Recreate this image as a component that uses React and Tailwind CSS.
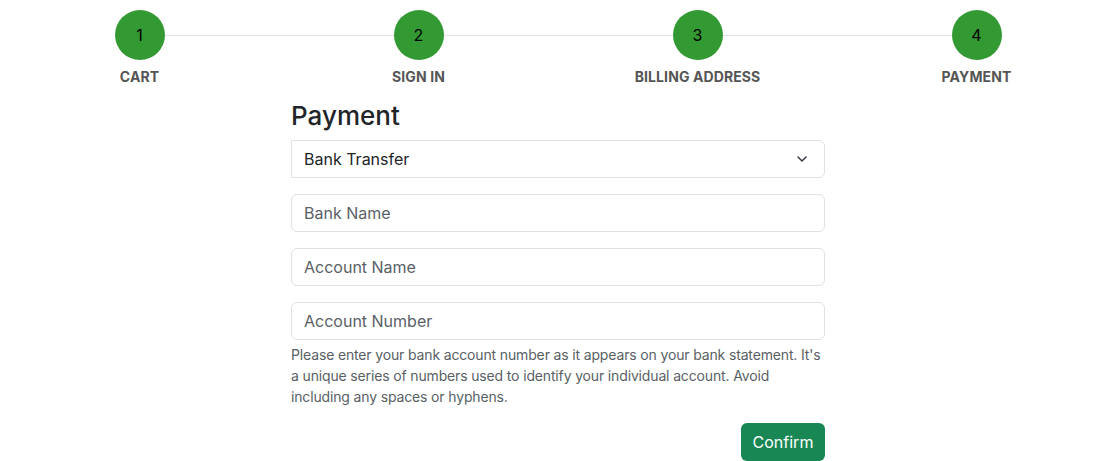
import { ChevronDown } from 'lucide-react';

const steps = ['Cart', 'Sign In', 'Billing Address', 'Payment'];

function Stepper() {
  return (
    <div className="flex">
      {steps.map((label, i) => (
        <div key={label} className="relative flex flex-1 flex-col items-center pt-[10px]">
          {i < steps.length - 1 && (
            <div className="absolute top-[35px] left-1/2 h-px w-full bg-[#e2e2e2]" />
          )}
          <div className="relative z-10 flex h-[50px] w-[50px] items-center justify-center rounded-full bg-[#339933] text-base text-black">
            {i + 1}
          </div>
          <div className="mt-[9px] text-[14px] font-bold uppercase leading-4 tracking-[0.1px] text-[#555]">{label}</div>
        </div>
      ))}
    </div>
  );
}

function Field({ placeholder }) {
  return (
    <input
      placeholder={placeholder}
      className="h-[38px] w-full rounded-md border border-[#dee2e6] bg-white px-3 text-base text-[#212529] outline-none placeholder:text-[#595f66]"
    />
  );
}

export default function App() {
  return (
    <div className="min-h-screen bg-white font-['Inter',sans-serif] text-[#212529]">
      <Stepper />
      <div className="mx-auto mt-[15px] w-[534px]">
        <h3 className="text-[26px] font-medium leading-[32px]">Payment</h3>
        <div className="mt-[8px] flex h-[38px] items-center justify-between rounded-r-md border border-[#dee2e6] bg-white pl-3 pr-[14px] text-base">
          <span>Bank Transfer</span>
          <ChevronDown size={16} strokeWidth={2.2} className="text-[#343a40]" />
        </div>
        <div className="mt-4 flex flex-col gap-4">
          <Field placeholder="Bank Name" />
          <Field placeholder="Account Name" />
          <Field placeholder="Account Number" />
        </div>
        <p className="mt-[4px] text-[14px] leading-[21px] tracking-[-0.15px] text-[#595f66]">
          Please enter your bank account number as it appears on your bank statement. It's a unique series of numbers used to identify your individual account. Avoid including any spaces or hyphens.
        </p>
        <div className="mt-[16px] flex justify-end">
          <button className="h-[38px] w-[84px] rounded-md bg-[#198754] text-base text-white">Confirm</button>
        </div>
      </div>
    </div>
  );
}
